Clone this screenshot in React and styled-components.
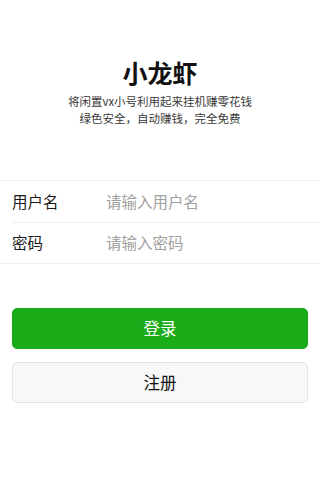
import React from "react";
import styled, { createGlobalStyle } from "styled-components";

const Global = createGlobalStyle`
  html, body { margin: 0; padding: 0; background: #fff; }
  body { font-family: "Noto Sans CJK SC", "Noto Sans", sans-serif; color: #000; }
  * { box-sizing: border-box; }
`;

const Page = styled.div`
  display: flex;
  flex-direction: column;
  padding-top: 56px;
`;

const Header = styled.header`
  display: flex;
  flex-direction: column;
  align-items: center;
`;

const Title = styled.h1`
  margin: 0;
  font-size: 25px;
  line-height: 33px;
  font-weight: 700;
  color: #111;
`;

const Sub = styled.p`
  margin: 4px 0 0;
  font-size: 11.5px;
  line-height: 17px;
  color: #3a3a3a;
  text-align: center;
`;

const Form = styled.div`
  margin-top: 53px;
  border-top: 1px solid #eeeeee;
  border-bottom: 1px solid #eeeeee;
`;

const Row = styled.label`
  display: flex;
  align-items: center;
  height: 41px;
  padding: 0 12px 1px;
  position: relative;
  & + &::before {
    content: "";
    position: absolute;
    top: 0;
    left: 12px;
    right: 0;
    border-top: 1px solid #eeeeee;
  }
`;

const Label = styled.span`
  width: 94px;
  font-size: 15.5px;
  color: #1a1a1a;
`;

const Input = styled.input`
  flex: 1;
  border: none;
  outline: none;
  background: transparent;
  font-family: inherit;
  font-size: 15.5px;
  padding: 0;
  color: #000;
  &::placeholder { color: #a0a0a0; }
`;

const Actions = styled.div`
  display: flex;
  flex-direction: column;
  gap: 13px;
  margin: 44px 12px 0;
`;

const Button = styled.button`
  height: 41px;
  border-radius: 5px;
  font-family: inherit;
  font-size: 16.5px;
  cursor: pointer;
  padding: 0 0 2px;
  border: 1px solid ${(p) => (p.$primary ? "#1aad19" : "#e3e3e3")};
  background: ${(p) => (p.$primary ? "#1aad19" : "#f8f8f8")};
  color: ${(p) => (p.$primary ? "#fff" : "#111")};
`;

export default function App() {
  return (
    <>
      <Global />
      <Page>
        <Header>
          <Title>小龙虾</Title>
          <Sub>
            将闲置vx小号利用起来挂机赚零花钱
            <br />
            绿色安全，自动赚钱，完全免费
          </Sub>
        </Header>
        <Form>
          <Row>
            <Label>用户名</Label>
            <Input placeholder="请输入用户名" />
          </Row>
          <Row>
            <Label>密码</Label>
            <Input type="password" placeholder="请输入密码" />
          </Row>
        </Form>
        <Actions>
          <Button $primary>登录</Button>
          <Button>注册</Button>
        </Actions>
      </Page>
    </>
  );
}
